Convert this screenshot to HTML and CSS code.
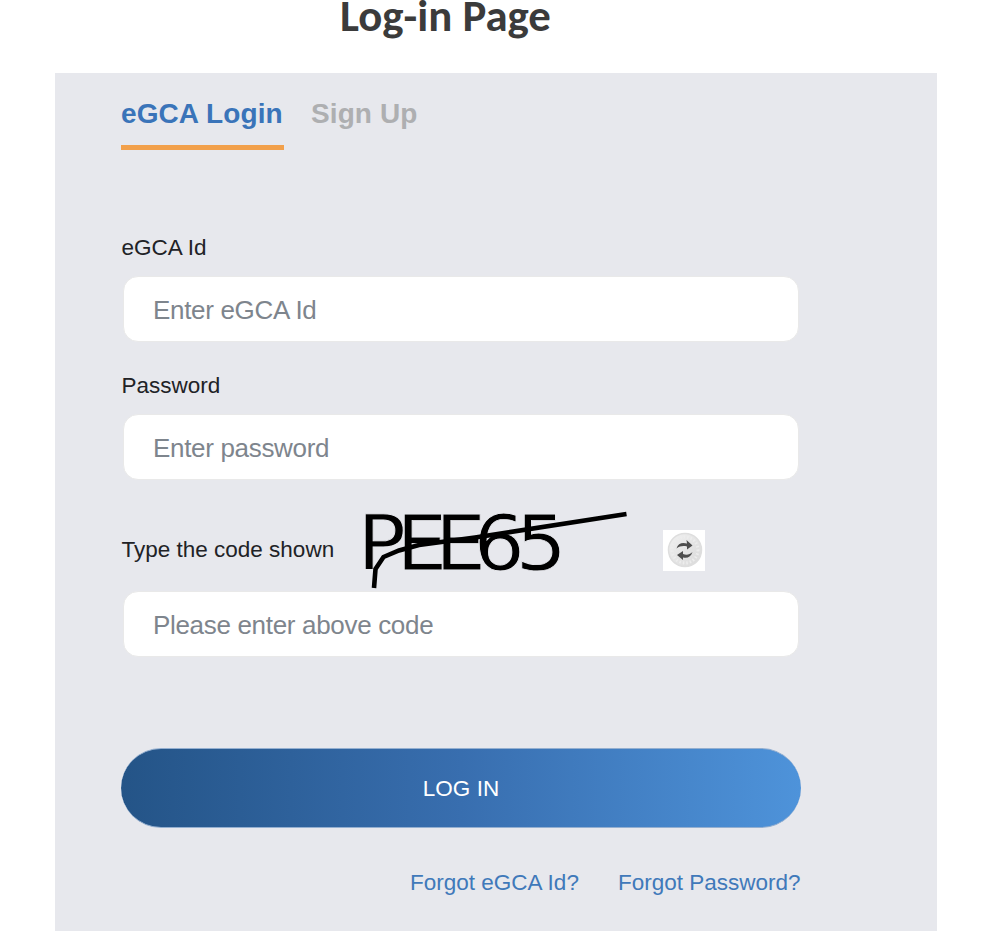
FILE: index.html
```html
<!DOCTYPE html>
<html lang="en">
<head>
<meta charset="utf-8">
<title>Log-in Page</title>
<link rel="stylesheet" href="styles.css">
</head>
<body>
<h1 class="title">Log-in Page</h1>
<main class="panel">
  <nav class="tabs">
    <a class="tab tab-active">eGCA Login</a>
    <a class="tab tab-signup">Sign Up</a>
  </nav>
  <form class="form">
    <label class="label label-id" for="id">eGCA Id</label>
    <input class="input input-id" id="id" type="text" placeholder="Enter eGCA Id">
    <label class="label label-password" for="pw">Password</label>
    <input class="input input-password" id="pw" type="password" placeholder="Enter password">
    <div class="captcha-row">
      <label class="label label-code" for="code">Type the code shown</label>
      <svg class="captcha" width="280" height="90" viewBox="0 0 280 90">
        <text class="captcha-text" transform="scale(1.05 1)" y="67.5" x="2.2 39.3 76.3 112.9 152.9">PEE65</text>
        <path d="M19 86 L20.5 67 L28.5 55 L44 48.5 L64 43 L120 35.5 L271.500 12" fill="none" stroke="#000" stroke-width="4.6"/>
      </svg>
      <button class="refresh" type="button" aria-label="Refresh code">
        <svg width="42" height="41" viewBox="0 0 42 41">
          <defs><linearGradient id="disc" x1="0" y1="0" x2="1" y2="1"><stop offset="0" stop-color="#f1f1f1"/><stop offset="1" stop-color="#d9d9d9"/></linearGradient></defs>
          <circle cx="22" cy="20" r="16.500" fill="url(#disc)" stroke="#dedede" stroke-width="1.500"/>
          <circle cx="22" cy="20" r="13" fill="none" stroke="#ededed" stroke-width="3" stroke-dasharray="1.500 2"/>
          <path d="M13.500 18.500C15 13.500 19 12 24 13.500L23.500 10L29.500 15.500L24 19.500L24 16.500C20 15.500 17 16 13.500 18.500Z" fill="#4d4d4d"/>
          <path d="M29.500 22C28 26.500 25 28.500 20 27.500L20 30L14 25L20 21L20 24C24 25.500 26.500 24.500 29.500 22Z" fill="#4d4d4d"/>
        </svg>
      </button>
    </div>
    <input class="input input-code" id="code" type="text" placeholder="Please enter above code">
    <button class="login" type="button">LOG IN</button>
    <div class="links">
      <a class="link link-id">Forgot eGCA Id?</a>
      <a class="link link-password">Forgot Password?</a>
    </div>
  </form>
</main>
</body>
</html>
```
FILE: styles.css
```css
* { box-sizing: border-box; }
body {
  margin: 0;
  height: 934px;
  overflow: hidden;
  background: #fff;
  font-family: "Liberation Sans", Arial, sans-serif;
}
.title {
  margin: 0;
  height: 73px;
  padding-left: 340px;
  font: bold 44.800px/31px Carlito, Lato, sans-serif;
  color: #3b3b3b;
  white-space: nowrap;
}
.panel {
  width: 882px;
  height: 858px;
  margin-left: 55px;
  padding: 22px 136px 0 66px;
  background: #e7e8ed;
}
.tabs { display: flex; gap: 27px; height: 55px; }
.tab {
  height: 55px;
  font-size: 28px;
  font-weight: bold;
  line-height: 37px;
  letter-spacing: 0.1px;
  color: #aeafb1;
  white-space: nowrap;
}
.tab-active { width: 163px; color: #3a74b9; border-bottom: 5px solid #f2a04b; }
.form { display: flex; flex-direction: column; padding-top: 85px; }
.label { padding-left: 0.5px; font-size: 22.500px; line-height: 26px; color: #212226; white-space: nowrap; }
.input {
  width: 676px;
  height: 66px;
  margin: 15px 0 0 2px;
  padding: 2px 29px 0 29px;
  border: 1px solid #e9e9e9;
  border-radius: 15px;
  background: #fff;
  font: 26px "Liberation Sans", Arial, sans-serif;
  letter-spacing: -0.32px;
  outline: none;
}
.input::placeholder { color: #7e858d; opacity: 1; }
.label-password { margin-top: 31px; }
.captcha-row { display: flex; align-items: flex-start; height: 103px; }
.label-code { width: 234px; margin-top: 57px; }
.captcha { flex: none; margin-top: 22px; overflow: visible; }
.captcha-text { font: 77px "DejaVu Sans", sans-serif; fill: #000; stroke: #e7e8ed; stroke-width: 0.9px; }
.refresh { flex: none; width: 42px; height: 41px; margin: 50px 0 0 28px; padding: 0; border: 0; background: #fff; }
.refresh svg { display: block; }
.input-code { margin-top: 8px; }
.login {
  height: 80px;
  margin-top: 91px;
  padding: 2px 0 0;
  border: 1px solid #94afd0;
  border-width: 1px 0;
  border-radius: 40px;
  background: linear-gradient(90deg, #245487, #386eaf 50%, #4e93da);
  color: #fff;
  font: 22.500px "Liberation Sans", Arial, sans-serif;
}
.links { display: flex; justify-content: flex-end; gap: 39px; margin-top: 42px; padding-right: 0.5px; }
.link { font-size: 22.500px; line-height: 26px; color: #4079ba; white-space: nowrap; }
```
